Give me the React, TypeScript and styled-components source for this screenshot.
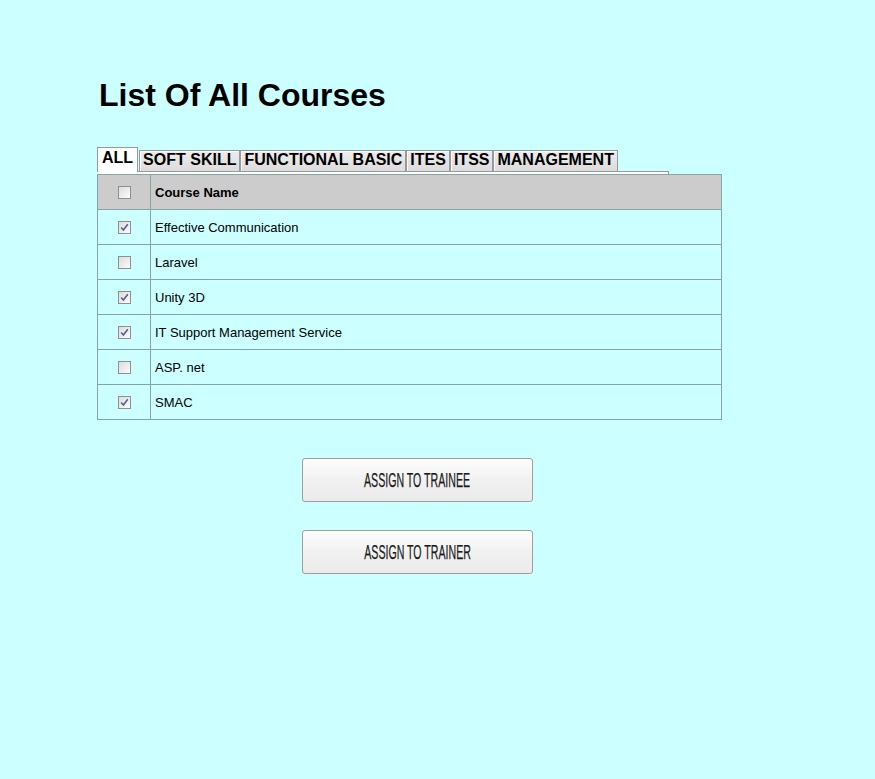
import React from "react";
import styled, { createGlobalStyle } from "styled-components";

const Global = createGlobalStyle`
  html, body { margin: 0; padding: 0; background: #ccffff; }
  body { font-family: "Liberation Sans", Arial, sans-serif; color: #000; }
`;

const Page = styled.div`
  padding: 77px 0 0 97px;
  min-height: 779px;
  box-sizing: border-box;
`;

const Title = styled.h1`
  margin: 0 0 33px 0;
  font-size: 32px;
  line-height: 37px;
  font-weight: 700;
  padding-left: 2px;
`;

const TabBar = styled.div`
  display: flex;
  align-items: flex-end;
  position: relative;
  z-index: 1;
  margin-bottom: -1px;
`;

const Tab = styled.div<{ $active?: boolean }>`
  box-sizing: border-box;
  height: ${(p) => (p.$active ? "25px" : "22px")};
  padding: ${(p) => (p.$active ? "0 4px 0 4px" : "0 3px 0 3px")};
  border: 1px solid #999;
  border-bottom: ${(p) => (p.$active ? "none" : "1px solid #999")};
  background: ${(p) => (p.$active ? "#fff" : "linear-gradient(#ededed, #dcdcdc)")};
  box-shadow: ${(p) => (p.$active ? "none" : "inset 1px 1px 0 #fafafa")};
  font-size: 16px;
  font-weight: 700;
  line-height: ${(p) => (p.$active ? "20px" : "18px")};
  margin-right: ${(p) => (p.$active ? "1px" : "0")};
  white-space: nowrap;
`;

const Strip = styled.div`
  width: 571px;
  height: 2px;
  background: #fff;
  border-top: 1px solid #999;
  border-right: 1px solid #999;
`;

const Table = styled.table`
  border-collapse: collapse;
  width: 625px;
  font-size: 13px;
`;

const HeadRow = styled.tr`
  background: #cccccc;
  height: 35px;
`;

const Row = styled.tr`
  height: 35px;
`;

const Cell = styled.td<{ $check?: boolean; $head?: boolean }>`
  border: 1px solid #86a4a4;
  padding: 0 0 0 ${(p) => (p.$check ? "0" : "4px")};
  width: ${(p) => (p.$check ? "52px" : "auto")};
  text-align: ${(p) => (p.$check ? "center" : "left")};
  font-weight: ${(p) => (p.$head ? 700 : 400)};
  vertical-align: middle;
`;

const Box = styled.span`
  display: inline-flex;
  align-items: center;
  justify-content: center;
  width: 13px;
  height: 13px;
  box-sizing: border-box;
  border: 1px solid #8f8f8f;
  background: linear-gradient(135deg, #dcdcdc, #fbfbfb);
  vertical-align: middle;
  margin-left: 1px;
  margin-bottom: 1px;
`;

const Buttons = styled.div`
  display: flex;
  flex-direction: column;
  gap: 28px;
  margin: 38px 0 0 205px;
`;

const Button = styled.button`
  width: 231px;
  height: 44px;
  border: 1px solid #a39d92;
  border-radius: 3px;
  background: linear-gradient(#fcfcfc, #f0f0f0 60%, #ebebeb);
  padding: 0;
  display: flex;
  align-items: center;
  justify-content: center;
  cursor: pointer;
`;

const ButtonLabel = styled.span`
  display: inline-block;
  font-family: "Liberation Sans", Arial, sans-serif;
  font-size: 20px;
  color: #1a1a1a;
  transform: scaleX(0.53);
  white-space: nowrap;
  -webkit-text-stroke: 0.25px #1a1a1a;
`;

const Check = ({ on }: { on: boolean }) => (
  <Box>
    {on && (
      <svg width="9" height="9" viewBox="0 0 9 9">
        <path d="M1.2 4.6 L3.4 7 L7.8 1.2" fill="none" stroke="#4d5f8c" strokeWidth="1.5" />
      </svg>
    )}
  </Box>
);

const courses = [
  { name: "Effective Communication", on: true },
  { name: "Laravel", on: false },
  { name: "Unity 3D", on: true },
  { name: "IT Support Management Service", on: true },
  { name: "ASP. net", on: false },
  { name: "SMAC", on: true },
];

const tabs = ["ALL", "SOFT SKILL", "FUNCTIONAL BASIC", "ITES", "ITSS", "MANAGEMENT"];

export default function App() {
  return (
    <Page>
      <Global />
      <Title>List Of All Courses</Title>
      <TabBar>
        {tabs.map((t, i) => (
          <Tab key={t} $active={i === 0}>
            {t}
          </Tab>
        ))}
      </TabBar>
      <Strip />
      <Table>
        <tbody>
          <HeadRow>
            <Cell $check>
              <Check on={false} />
            </Cell>
            <Cell $head>Course Name</Cell>
          </HeadRow>
          {courses.map((c) => (
            <Row key={c.name}>
              <Cell $check>
                <Check on={c.on} />
              </Cell>
              <Cell>{c.name}</Cell>
            </Row>
          ))}
        </tbody>
      </Table>
      <Buttons>
        <Button>
          <ButtonLabel>ASSIGN TO TRAINEE</ButtonLabel>
        </Button>
        <Button>
          <ButtonLabel>ASSIGN TO TRAINER</ButtonLabel>
        </Button>
      </Buttons>
    </Page>
  );
}
